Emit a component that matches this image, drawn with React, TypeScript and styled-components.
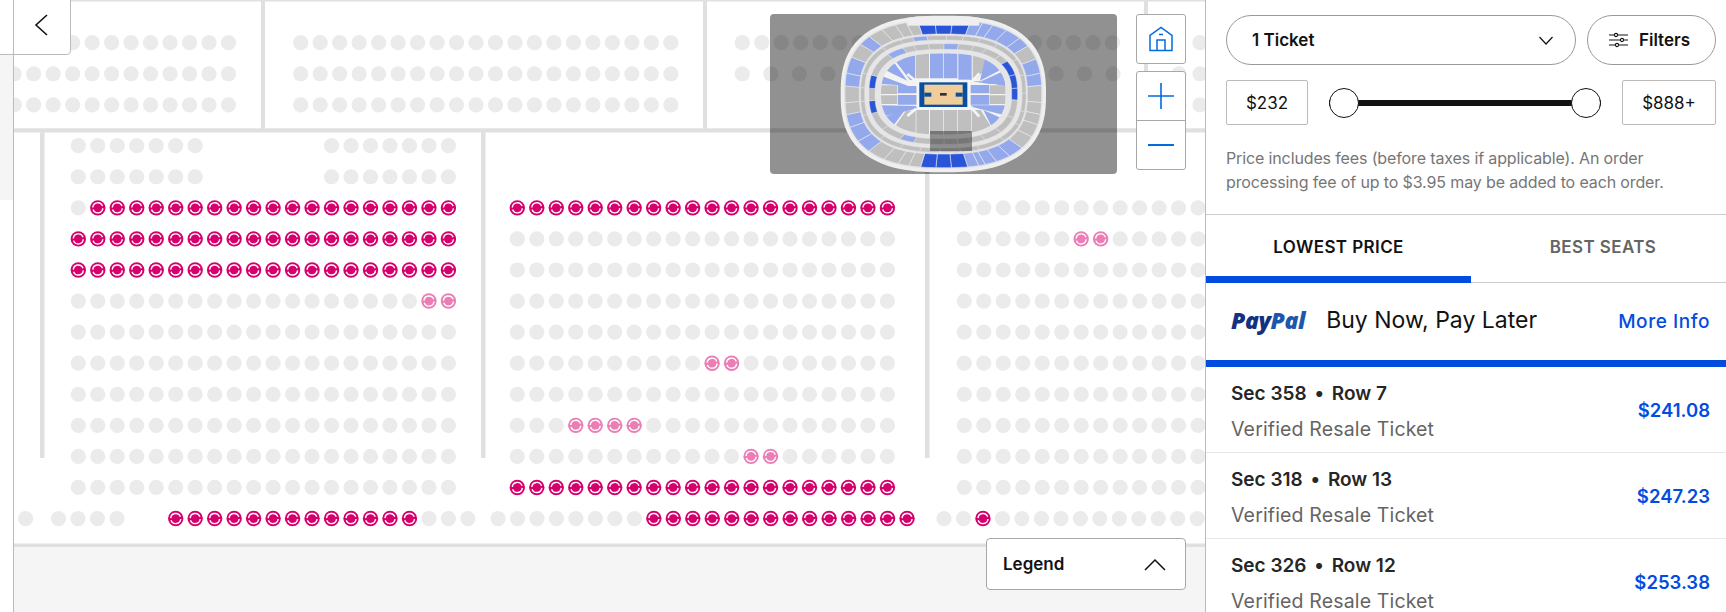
import React from "react";
import styled, { createGlobalStyle } from "styled-components";

const Global = createGlobalStyle`
  html, body { margin: 0; padding: 0; background: #fff; }
  body { font-family: Inter, "Noto Sans", sans-serif; overflow: hidden; }
  * { box-sizing: border-box; }
`;

const Page = styled.div`
  display: flex;
  width: 1726px;
  height: 612px;
  overflow: hidden;
  background: #fff;
`;
const Rail = styled.div`
  width: 14px;
  flex: none;
  display: flex;
  flex-direction: column;
  border-right: 1px solid #bbb;
`;
const RailTop = styled.div`
  height: 55px;
  border-bottom: 1px solid #bbb;
`;
const RailShade = styled.div`
  height: 145px;
  background: #f5f5f5;
`;
const MapPane = styled.div`
  position: relative;
  width: 1191px;
  flex: none;
  background: #f5f5f5;
  overflow: hidden;
`;
const SeatSvg = styled.svg`
  display: block;
`;
const BackButton = styled.button`
  position: absolute;
  left: -1px;
  top: -1px;
  width: 58px;
  height: 56px;
  padding: 0 2px 4px 0;
  background: #fff;
  border: 1px solid #bbb;
  border-radius: 0 0 4px 0;
  display: flex;
  align-items: center;
  justify-content: center;
`;
const Overview = styled.div`
  position: absolute;
  left: 756px;
  top: 14px;
  width: 347px;
  height: 160px;
  border-radius: 4px;
  background: rgba(0, 0, 0, 0.43);
`;
const ArenaSvg = styled.svg`
  position: absolute;
  left: 50px;
  top: -4px;
`;
const Controls = styled.div`
  position: absolute;
  left: 1122px;
  top: 14px;
  display: flex;
  flex-direction: column;
  gap: 7px;
`;
const ControlGroup = styled.div`
  width: 50px;
  background: #fff;
  border: 1px solid #a8a8a8;
  border-radius: 3px;
  display: flex;
  flex-direction: column;
`;
const ControlButton = styled.div<{ $divided?: boolean; $h: number }>`
  height: ${(p) => p.$h}px;
  display: flex;
  align-items: center;
  justify-content: center;
  border-top: ${(p) => (p.$divided ? "1px solid #a8a8a8" : "none")};
`;
const Legend = styled.div`
  position: absolute;
  left: 972px;
  top: 538px;
  width: 200px;
  height: 52px;
  padding: 0 19px 0 16px;
  background: #fff;
  border: 1px solid #a8a8a8;
  border-radius: 4px;
  display: flex;
  align-items: center;
  justify-content: space-between;
  font-size: 17px;
  font-weight: 600;
  color: #121212;
`;
const Side = styled.div`
  width: 521px;
  flex: none;
  border-left: 1px solid #bbb;
  display: flex;
  flex-direction: column;
  background: #fff;
`;
const Filters = styled.div`
  height: 215px;
  flex: none;
  padding: 15px 10px 0 20px;
  border-bottom: 1px solid #ccc;
`;
const TopRow = styled.div`
  display: flex;
  gap: 11px;
`;
const Pill = styled.div<{ $w: number }>`
  width: ${(p) => p.$w}px;
  height: 50px;
  border: 1px solid #999;
  border-radius: 25px;
  display: flex;
  align-items: center;
  font-size: 17px;
  font-weight: 600;
  color: #121212;
`;
const TicketPill = styled(Pill)`
  justify-content: space-between;
  padding: 0 22px 0 25px;
`;
const FilterPill = styled(Pill)`
  justify-content: center;
  gap: 11px;
  padding-right: 4px;
`;
const PriceRow = styled.div`
  display: flex;
  align-items: center;
  margin-top: 15px;
`;
const PriceBox = styled.div<{ $w: number }>`
  width: ${(p) => p.$w}px;
  height: 45px;
  flex: none;
  border: 1px solid #bbb;
  border-radius: 2px;
  display: flex;
  align-items: center;
  justify-content: center;
  font-size: 17px;
  color: #121212;
`;
const SliderTrack = styled.div`
  flex: 1;
  margin: 0 21px;
  height: 30px;
  display: flex;
  align-items: center;
  justify-content: space-between;
  background: linear-gradient(#121212, #121212) center / 100% 6px no-repeat;
`;
const Thumb = styled.div`
  width: 30px;
  height: 30px;
  border-radius: 50%;
  background: #fff;
  border: 1px solid #121212;
`;
const Note = styled.p`
  margin: 21px 0 0;
  font-size: 16px;
  line-height: 24px;
  letter-spacing: -0.13px;
  color: #767676;
  white-space: nowrap;
`;
const Tabs = styled.div`
  display: flex;
  flex: none;
  height: 68px;
`;
const Tab = styled.div<{ $active?: boolean; $w: number }>`
  width: ${(p) => p.$w}px;
  display: flex;
  align-items: center;
  justify-content: center;
  padding: ${(p) => (p.$active ? "3px 0 0 0" : "0 0 3px 9px")};
  font-size: 17px;
  font-weight: 600;
  letter-spacing: 0.4px;
  color: ${(p) => (p.$active ? "#121212" : "#646464")};
  border-bottom: ${(p) => (p.$active ? "7px solid #024ddf" : "1px solid #ccc")};
`;
const Promo = styled.div`
  height: 84px;
  flex: none;
  padding: 0 16px 0 25px;
  border-bottom: 7px solid #024ddf;
  display: flex;
  align-items: center;
`;
const PayPal = styled.span`
  font-family: "Open Sans", sans-serif;
  font-style: italic;
  font-weight: 800;
  font-size: 23px;
  letter-spacing: -0.4px;
  color: #14307f;
  margin-right: 21px;
  margin-top: -3px;
  & > b {
    font-weight: 800;
    color: #1d56ad;
  }
`;
const PromoText = styled.span`
  font-size: 23px;
  color: #121212;
  margin-top: -3px;
`;
const MoreInfo = styled.span`
  margin-left: auto;
  font-size: 19px;
  font-weight: 500;
  letter-spacing: 0.55px;
  color: #024ddf;
`;
const TicketRow = styled.div`
  height: 86px;
  flex: none;
  padding: 0 16px 0 25px;
  border-bottom: 1px solid #e6e6e6;
  display: flex;
  align-items: center;
  justify-content: space-between;
`;
const TicketInfo = styled.div`
  display: flex;
  flex-direction: column;
  gap: 13px;
  margin-top: 3px;
`;
const TicketTitle = styled.div`
  font-size: 19px;
  line-height: 22px;
  font-weight: 600;
  color: #262626;
`;
const TitleDot = styled.span`
  margin: 0 3px;
`;
const TicketSub = styled.div`
  font-size: 19.5px;
  line-height: 22px;
  letter-spacing: 0.15px;
  color: #646464;
`;
const Price = styled.div`
  font-size: 18.5px;
  font-weight: 600;
  color: #024ddf;
`;

const ROW = (k: number) => (k < 3 ? 42.7 + 31.07 * k : 145.7 + 31.07 * (k - 3));
const PITCH = 19.48;

type Run = { x: number; n: number; kind?: "hot" | "soft"; p?: number };
const seatRows: { k: number; runs: Run[] }[] = [];
const L = 64.3;
const M = 503.3;
const R = 950.3;
const span = (k: number, x: number, n: number, marks: [number, number, "hot" | "soft"][] = []) => {
  const runs: Run[] = [];
  let i = 0;
  for (const [from, to, kind] of marks) {
    if (from > i) runs.push({ x: x + i * PITCH, n: from - i });
    runs.push({ x: x + from * PITCH, n: to - from + 1, kind });
    i = to + 1;
  }
  if (i < n) runs.push({ x: x + i * PITCH, n: n - i });
  seatRows.push({ k, runs });
};

// upper sections
[0, 1, 2].forEach((k) => {
  span(k, 0.2, 12);
  span(k, 286.7, 20);
});
span(0, 728.3, 20);
seatRows.push({ k: 1, runs: [{ x: 728.3, n: 14, p: 28.52 }] });
seatRows.push({ k: 0, runs: [{ x: 1164, n: 2, p: 22 }] });
seatRows.push({ k: 1, runs: [{ x: 1165, n: 2, p: 21 }] });
seatRows.push({ k: 2, runs: [{ x: 1165, n: 2, p: 21 }] });
// lower-left section
[3, 4].forEach((k) => {
  span(k, L, 7);
  span(k, L + 13 * PITCH, 7);
});
span(5, L, 20, [[1, 19, "hot"]]);
span(6, L, 20, [[0, 19, "hot"]]);
span(7, L, 20, [[0, 19, "hot"]]);
span(8, L, 20, [[18, 19, "soft"]]);
[9, 10, 11, 12, 13, 14].forEach((k) => span(k, L, 20));
// middle section
span(5, M, 20, [[0, 19, "hot"]]);
[6, 7, 8, 9, 11].forEach((k) => span(k, M, 20));
span(10, M, 20, [[10, 11, "soft"]]);
span(12, M, 20, [[3, 6, "soft"]]);
span(13, M, 20, [[12, 13, "soft"]]);
span(14, M, 20, [[0, 19, "hot"]]);
// right section
span(5, R, 13);
span(6, R, 13, [[6, 7, "soft"]]);
[7, 8, 9, 10, 11, 12, 13, 14].forEach((k) => span(k, R, 13));
// front row
span(15, 11.6, 1);
span(15, 44.5, 4);
span(15, 161.7, 16, [[0, 12, "hot"]]);
span(15, 484, 22, [[8, 21, "hot"]]);
span(15, 930, 15, [[2, 2, "hot"]]);

const Seat = ({ cx, cy, kind }: { cx: number; cy: number; kind?: "hot" | "soft" }) => {
  if (!kind) return <circle cx={cx} cy={cy} r={7.6} fill="#ebebeb" />;
  return (
    <g opacity={kind === "soft" ? 0.5 : 1}>
      <circle cx={cx} cy={cy} r={7.7} fill="#d6006d" />
      <path
        d={`M${cx - 5} ${cy - 0.4}A5 5 0 0 1 ${cx + 4.7} ${cy - 1.7}M${cx + 5} ${cy + 0.4}A5 5 0 0 1 ${cx - 4.7} ${cy + 1.7}`}
        fill="none"
        stroke="#fff"
        strokeWidth={1.4}
      />
      <circle cx={cx} cy={cy} r={2.2} fill="#d6006d" />
    </g>
  );
};

const WALL = "#e0e0e0";
const SeatMap = () => (
  <SeatSvg width={1191} height={547} viewBox="0 0 1191 547">
    <rect x={0} y={0} width={1191} height={545} fill="#fff" />
    <rect x={0} y={0} width={1191} height={1.5} fill={WALL} />
    <rect x={0} y={543.5} width={1191} height={3.5} fill={WALL} />
    <rect x={0} y={128.3} width={1191} height={4.2} fill={WALL} />
    <rect x={247} y={0} width={4} height={130} fill={WALL} />
    <rect x={689} y={0} width={4} height={130} fill={WALL} />
    <rect x={1130} y={0} width={4} height={130} fill={WALL} />
    <rect x={26} y={130} width={4.5} height={328} fill={WALL} />
    <rect x={467} y={130} width={4.5} height={328} fill={WALL} />
    <rect x={911} y={130} width={4.5} height={328} fill={WALL} />
    {seatRows.map((r) =>
      r.runs.flatMap((run, a) =>
        Array.from({ length: run.n }, (_, i) => (
          <Seat key={`${r.k}-${run.x}-${a}-${i}`} cx={run.x + i * (run.p ?? PITCH)} cy={ROW(r.k)} kind={run.kind} />
        ))
      )
    )}
  </SeatSvg>
);

// ---- arena overview drawing, centred on (370, 252) in a 720x510 box
const CX = 370;
const CY = 252;
const N = 2.6;
const rad = (phi: number, a: number, b: number) =>
  1 / Math.pow(Math.pow(Math.abs(Math.cos(phi)) / a, N) + Math.pow(Math.abs(Math.sin(phi)) / b, N), 1 / N);
const pt = (phi: number, a: number, b: number) => {
  const r = rad(phi, a, b);
  return `${(CX + r * Math.cos(phi)).toFixed(1)} ${(CY + r * Math.sin(phi)).toFixed(1)}`;
};
const ring = (a: number, b: number) => {
  const pts: string[] = [];
  for (let i = 0; i < 96; i++) pts.push(pt((i / 96) * Math.PI * 2, a, b));
  return `M${pts.join("L")}Z`;
};
const ang = (x: number, y: number) => Math.atan2(y - CY, x - CX);
const sector = (p: Seg, q: Seg, a0: number, b0: number, a1: number, b1: number) => {
  const s = ang(p[0], p[1]);
  let e = ang(q[0], q[1]);
  if (e < s) e += Math.PI * 2;
  const steps = 5;
  const outer: string[] = [];
  const inner: string[] = [];
  for (let i = 0; i <= steps; i++) {
    const f = s + ((e - s) * i) / steps;
    outer.push(pt(f, a1, b1));
    inner.unshift(pt(f, a0, b0));
  }
  return `M${outer.join("L")}L${inner.join("L")}Z`;
};

const G = "#bfbfbf";
const LB = "#94a9ec";
const DB = "#2b55d9";

type Seg = [number, number, string];
const outerRing: Seg[] = [
  [302, 60, DB], [348, 60, DB], [394, 60, DB], [442, 60, LB], [479, 55, LB], [508, 60, LB], [548, 72, LB], [588, 92, LB],
  [612, 115, G], [640, 150, LB], [660, 190, LB], [668, 226, G], [668, 278, G], [668, 315, G], [655, 345, G], [630, 378, G],
  [600, 410, LB], [565, 435, LB], [530, 455, LB], [500, 470, LB], [478, 470, LB], [443, 470, DB], [394, 470, DB], [348, 470, DB],
  [302, 470, G], [265, 470, G], [232, 465, G], [190, 450, G], [150, 420, LB], [120, 390, LB], [95, 350, LB], [75, 315, G],
  [75, 278, G], [75, 228, LB], [85, 190, LB], [105, 145, G], [125, 105, LB], [155, 85, G], [197, 70, G], [235, 58, G], [265, 50, G],
];
const thinRing: Seg[] = [
  [278, 84, LB], [322, 84, G], [380, 84, G], [430, 84, G], [480, 88, G], [530, 105, G], [575, 155, G], [590, 200, G], [590, 250, G],
  [590, 300, G], [585, 340, G], [550, 390, G], [480, 420, G], [420, 420, G], [360, 420, G], [300, 420, G], [240, 415, G], [190, 380, G],
  [152, 310, G], [152, 272, G], [152, 235, G], [152, 195, G], [190, 115, G], [240, 88, G],
];
const midRing: Seg[] = [
  [282, 110, G], [327, 110, G], [372, 110, LB], [414, 110, G], [460, 110, G], [500, 115, G], [535, 140, G], [560, 155, DB], [578, 196, DB], [585, 235, DB],
  [585, 270, G], [570, 320, G], [540, 365, G], [500, 395, G], [455, 400, G], [414, 400, G], [372, 400, G], [330, 400, G], [282, 395, LB],
  [242, 385, G], [200, 350, G], [155, 310, DB], [155, 272, G], [155, 235, DB], [155, 195, G], [205, 135, LB], [245, 110, G],
];

const bowl: [string, string][] = [
  ["M287 125H327V205H287Z", G],
  ["M330 125H370V205H330Z", LB],
  ["M372 125H412V205H372Z", LB],
  ["M415 125H455V210H415Z", LB],
  ["M458 125H500V175L470 205H458Z", G],
  ["M228 125H285V210H270L228 155Z", LB],
  ["M224 160L262 212L215 190L180 172Z", LB],
  ["M500 125H570V165L480 212Z", LB],
  ["M480 215L570 175V232L490 215Z", LB],
  ["M178 195L265 228H290V250H234V225L178 222Z", LB],
  ["M178 226H232V252H178Z", G],
  ["M178 256H232V282H178Z", G],
  ["M234 255H290V284H234Z", LB],
  ["M178 286L290 288V296L178 322Z", LB],
  ["M178 326L255 300L210 360Z", LB],
  ["M258 302L287 302V380H228V345Z", G],
  ["M289 300H327V380H289Z", G],
  ["M330 300H370V380H330Z", G],
  ["M372 300H412V380H372Z", G],
  ["M414 300H453V380H414Z", G],
  ["M455 300H482L510 345V380H455Z", G],
  ["M490 300L560 332L520 360Z", LB],
  ["M452 255H508V284H452Z", LB],
  ["M452 225H508V250H452Z", LB],
  ["M510 226H565V252H510Z", G],
  ["M510 256H565V282H510Z", G],
  ["M452 286H565V318L460 292Z", LB],
  ["M455 214H495L565 185V222L508 222V222Z", LB],
];

const Arena = () => (
  <ArenaSvg width={240} height={170} viewBox="0 0 720 510">
    <defs>
      <clipPath id="bowl-clip">
        <path d={ring(187, 122)} />
      </clipPath>
      <clipPath id="shell-clip">
        <path d={ring(308, 235)} />
      </clipPath>
    </defs>
    <path d={ring(308, 235)} fill="#efefef" />
    <path d={ring(298, 224)} fill="#e2e2e2" />
    {outerRing.map((s, i) => (
      <path
        key={i}
        d={sector(s, outerRing[(i + 1) % outerRing.length], 252, 180, 295, 221)}
        fill={s[2]}
        stroke="#efefef"
        strokeWidth={1.6}
      />
    ))}
    <rect x={262} y={18} width={216} height={29} fill="#efefef" clipPath="url(#shell-clip)" />
    <path d={ring(249, 177)} fill="#e6e6e6" />
    {thinRing.map((s, i) => (
      <path
        key={i}
        d={sector(s, thinRing[(i + 1) % thinRing.length], 236, 162, 248, 175)}
        fill={s[2]}
        stroke="#e6e6e6"
        strokeWidth={1.4}
      />
    ))}
    {midRing.map((s, i) => (
      <path
        key={i}
        d={sector(s, midRing[(i + 1) % midRing.length], 205, 134, 223, 151)}
        fill={s[2]}
        stroke="#e6e6e6"
        strokeWidth={1.4}
      />
    ))}
    <path d={ring(187, 122)} fill="#f3f3f3" />
    <g clipPath="url(#bowl-clip)">
      {bowl.map(([d, c], i) => (
        <path key={i} d={d} fill={c} />
      ))}
    </g>
    <path d="M262 192L288 214M478 190L456 214M262 318L288 296M478 320L456 296" stroke="#f5f5f5" strokeWidth={8} />
    <rect x={290} y={209} width={160} height={89} fill="#f5f5f5" />
    <rect x={298} y={217} width={144} height={74} fill="#0a4f9e" />
    <rect x={313} y={224} width={115} height={60} fill="#f1cd9c" />
    <rect x={313} y={248} width={21} height={12} fill="#0a4f9e" />
    <rect x={407} y={248} width={21} height={12} fill="#0a4f9e" />
    <rect x={360} y={249} width={20} height={8} fill="#333" />
    <rect x={330} y={363} width={126} height={60} fill="rgba(0,0,0,0.38)" />
  </ArenaSvg>
);

const BLUE = "#026cdf";

const rows = [
  ["Sec 358", "Row 7", "$241.08"],
  ["Sec 318", "Row 13", "$247.23"],
  ["Sec 326", "Row 12", "$253.38"],
];

export default function App() {
  return (
    <Page>
      <Global />
      <Rail>
        <RailTop />
        <RailShade />
      </Rail>
      <MapPane>
        <SeatMap />
        <BackButton aria-label="Back">
          <svg width="14" height="22" viewBox="0 0 14 22" fill="none" stroke="#121212" strokeWidth="1.6">
            <path d="M13 1L2 11L13 21" />
          </svg>
        </BackButton>
        <Overview>
          <Arena />
        </Overview>
        <Controls>
          <ControlGroup>
            <ControlButton $h={48}>
              <svg width="24" height="26" viewBox="0 0 24 26" fill="none" stroke={BLUE} strokeWidth="1.5">
                <path d="M1 24.5V9.5L12 1.5L23 9.5V24.5Z" />
                <path d="M8 24.5V14H16V24.5M10 8.5H14" />
              </svg>
            </ControlButton>
          </ControlGroup>
          <ControlGroup>
            <ControlButton $h={48}>
              <svg width="26" height="26" viewBox="0 0 26 26" stroke={BLUE} strokeWidth="1.6">
                <path d="M0 13H26M13 0V26" />
              </svg>
            </ControlButton>
            <ControlButton $h={49} $divided>
              <svg width="26" height="4" viewBox="0 0 26 4" stroke={BLUE} strokeWidth="2">
                <path d="M0 2H26" />
              </svg>
            </ControlButton>
          </ControlGroup>
        </Controls>
        <Legend>
          Legend
          <svg width="22" height="13" viewBox="0 0 22 13" fill="none" stroke="#121212" strokeWidth="1.5">
            <path d="M1 12L11 2L21 12" />
          </svg>
        </Legend>
      </MapPane>
      <Side>
        <Filters>
          <TopRow>
            <TicketPill $w={350}>
              1 Ticket
              <svg width="14" height="9" viewBox="0 0 14 9" fill="none" stroke="#121212" strokeWidth="1.2">
                <path d="M0.5 1L7 8L13.5 1" />
              </svg>
            </TicketPill>
            <FilterPill $w={129}>
              <svg width="19" height="16" viewBox="0 0 19 16" fill="none" stroke="#121212" strokeWidth="1.1">
                <path d="M0 3H5M9 3H19M0 8H11M15 8H19M0 13H6M10 13H19" />
                <circle cx="7" cy="3" r="1.6" />
                <circle cx="13" cy="8" r="1.6" />
                <circle cx="8" cy="13" r="1.6" />
              </svg>
              Filters
            </FilterPill>
          </TopRow>
          <PriceRow>
            <PriceBox $w={82}>$232</PriceBox>
            <SliderTrack>
              <Thumb />
              <Thumb />
            </SliderTrack>
            <PriceBox $w={94}>$888+</PriceBox>
          </PriceRow>
          <Note>
            Price includes fees (before taxes if applicable). An order
            <br />
            processing fee of up to $3.95 may be added to each order.
          </Note>
        </Filters>
        <Tabs>
          <Tab $active $w={265}>LOWEST PRICE</Tab>
          <Tab $w={255}>BEST SEATS</Tab>
        </Tabs>
        <Promo>
          <PayPal>
            Pay<b>Pal</b>
          </PayPal>
          <PromoText>Buy Now, Pay Later</PromoText>
          <MoreInfo>More Info</MoreInfo>
        </Promo>
        {rows.map(([sec, row, price]) => (
          <TicketRow key={sec}>
            <TicketInfo>
              <TicketTitle>
                {sec} <TitleDot>•</TitleDot> {row}
              </TicketTitle>
              <TicketSub>Verified Resale Ticket</TicketSub>
            </TicketInfo>
            <Price>{price}</Price>
          </TicketRow>
        ))}
      </Side>
    </Page>
  );
}
